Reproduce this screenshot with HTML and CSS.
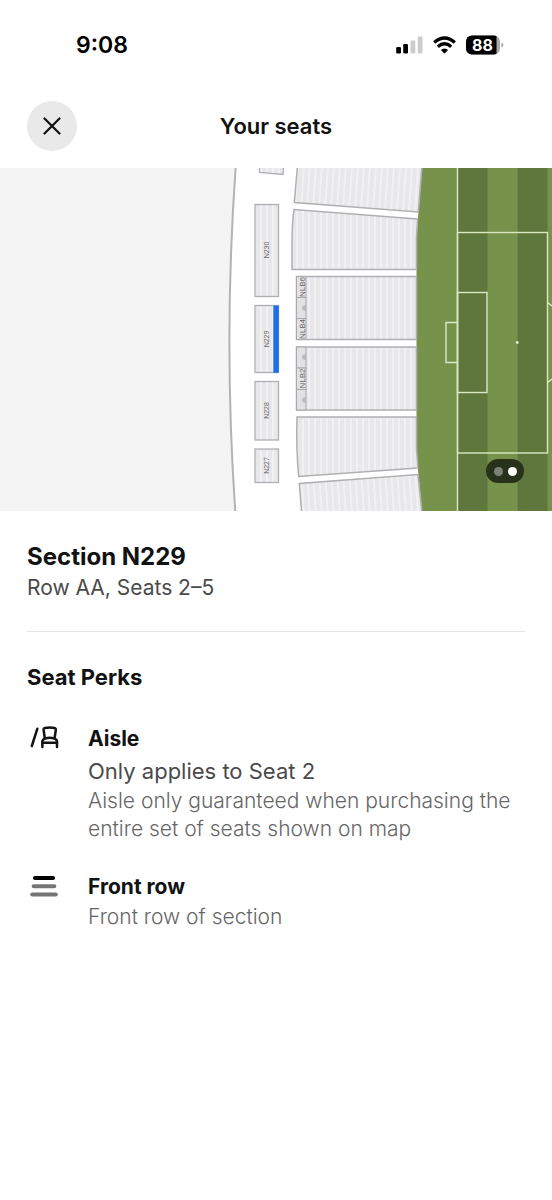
FILE: index.html
```html
<!DOCTYPE html>
<html lang="en">
<head>
    <meta charset="UTF-8">
    <meta name="viewport" content="width=device-width, initial-scale=1">
    <title>Your seats</title>
    <link rel="stylesheet" href="styles.css">
</head>
<body>

    <div class="status-bar">
        <span class="time">9:08</span>
        <div class="status-icons">
            <svg width="28" height="18" viewBox="0 0 28 18">
                <rect x="0.2" y="11" width="4.8" height="6.5" rx="1.3"/>
                <rect x="7.2" y="8" width="4.8" height="9.5" rx="1.3"/>
                <rect x="14.5" y="4.5" width="4.8" height="13" rx="1.3" fill="#cccccc"/>
                <rect x="21.7" y="0.5" width="4.8" height="17" rx="1.3" fill="#cccccc"/>
            </svg>
            <svg width="24" height="18" viewBox="0 0 24 18">
                <g fill="none" stroke="#000" stroke-width="3.3">
                    <path d="M1.2 6.4 Q11.5 -2.4 21.8 6.4"/>
                    <path d="M4.8 10.7 Q11.5 4.9 18.2 10.7"/>
                </g>
                <path d="M7.9 14 Q11.5 11 15.1 14 L12.2 17 Q11.5 17.7 10.8 17 Z"/>
            </svg>
            <svg width="38" height="20" viewBox="0 0 38 20">
                <clipPath id="battery"><rect width="34" height="19" y="0.5" rx="6"/></clipPath>
                <rect width="34" height="19" y="0.5" rx="6" fill="#aaaaaa"/>
                <rect width="30.5" height="20" clip-path="url(#battery)"/>
                <path d="M35.3 7.5 Q37.4 8.3 37.4 10 Q37.4 11.7 35.3 12.5 Z" fill="#aaaaaa"/>
                <text class="battery-level" x="16.5" y="16" text-anchor="middle">88</text>
            </svg>
        </div>
    </div>

    <header class="header">
        <button class="close" type="button" aria-label="Close">
            <svg width="18" height="18" viewBox="0 0 18 18">
                <path d="M1.5 1.5 L16.5 16.5 M16.5 1.5 L1.5 16.5" fill="none" stroke="#121212" stroke-width="2.2" stroke-linecap="round"/>
            </svg>
        </button>
        <h1>Your seats</h1>
    </header>

    <div class="map">
        <svg class="map-drawing" viewBox="0 0 552 343">
            <defs>
                <pattern id="rows" width="6" height="10" patternUnits="userSpaceOnUse">
                    <rect width="6" height="10" fill="#e8e8eb"/>
                    <rect x="2" width="2" height="10" fill="#f1f1f3"/>
                </pattern>
                <pattern id="rows-top" href="#rows" patternTransform="rotate(4)"/>
                <pattern id="rows-bottom" href="#rows" patternTransform="rotate(-4)"/>
            </defs>

            <!-- outer wall -->
            <rect width="552" height="343" fill="#f4f4f4"/>
            <path d="M235.7 -1 Q223.3 171 235.3 344 H552 V-1 Z" fill="#fff" stroke="#b3b3b3" stroke-width="2"/>

            <!-- pitch -->
            <path d="M422 0 L418 50 L416.5 70 V280 L418 302 L422 343 H552 V0 Z" fill="#77924b"/>
            <rect x="458" width="29.5" height="343" fill="#5f773d"/>
            <rect x="517.5" width="30" height="343" fill="#5f773d"/>
            <g fill="none" stroke="#d9e8c3" stroke-width="1.4">
                <path d="M457.5 0 V343"/>
                <rect x="457.5" y="64.5" width="90" height="220.5"/>
                <rect x="457.5" y="124.5" width="29.5" height="100"/>
                <path d="M457.5 154.5 H446 V194.5 H457.5"/>
                <path d="M547.5 134.5 L552 138 M547.5 214.5 L552 211"/>
            </g>
            <circle cx="517.3" cy="174.5" r="1.4" fill="#e8f4d6"/>

            <!-- upper tier -->
            <g fill="url(#rows)" stroke="#b0b0b2" stroke-width="1.3">
                <path d="M259.5 -2 V4.5 L283 6.5 L283.5 -2 Z"/>
                <rect x="255" y="36.5" width="23.5" height="92"/>
                <rect x="255" y="137.5" width="23.5" height="67"/>
                <rect x="255" y="213.5" width="23.5" height="58.5"/>
                <rect x="255" y="281" width="23.5" height="33.5"/>
            </g>
            <rect x="273.3" y="137.5" width="5.5" height="67.3" fill="#1f6de8"/>

            <!-- lower tier -->
            <g fill="url(#rows)" stroke="#b0b0b2" stroke-width="1.5">
                <path d="M297.5 -2 L294.3 34.5 L418.3 44 L422 -2" fill="url(#rows-top)"/>
                <path d="M417.5 51 L294 41.5 Q292 55 292 75 V101.5 H416.5 V70 Z"/>
                <path d="M416.5 108.5 H296.5 V171.5 H416.5 Z"/>
                <path d="M416.5 179 H296.5 V242 H416.5 Z"/>
                <path d="M416.5 249 H297 Q296 281 298.7 308.5 L417.8 300 L416.5 280 Z"/>
                <path d="M422 345 L418 306.5 L299.3 315.5 L301.7 345" fill="url(#rows-bottom)"/>
            </g>

            <!-- lodge boxes -->
            <g fill="#e2e2e4" stroke="#aaaaac">
                <rect x="296.5" y="108.5" width="9.5" height="21"/>
                <rect x="296.5" y="129.5" width="9.5" height="21"/>
                <rect x="296.5" y="150.5" width="9.5" height="21"/>
                <rect x="296.5" y="179" width="9.5" height="21"/>
                <rect x="296.5" y="200" width="9.5" height="21.5"/>
                <rect x="296.5" y="221.5" width="9.5" height="20.5"/>
            </g>
            <g fill="#bcbcbe">
                <path d="M306 137 Q302 137 302 140 Q302 143 306 143 Z"/>
                <path d="M306 186 Q302 186 302 189 Q302 192 306 192 Z"/>
                <path d="M306 229 Q302 229 302 232 Q302 235 306 235 Z"/>
            </g>

            <g class="section-label">
                <text transform="translate(269 82) rotate(-90)">N230</text>
                <text transform="translate(269 171) rotate(-90)">N229</text>
                <text transform="translate(269 242.5) rotate(-90)">N228</text>
                <text transform="translate(269 297.5) rotate(-90)">N227</text>
            </g>
            <g class="section-label box-label">
                <text transform="translate(304.5 119) rotate(-90)">NLB6</text>
                <text transform="translate(304.5 161) rotate(-90)">NLB4</text>
                <text transform="translate(304.5 210.5) rotate(-90)">NLB2</text>
            </g>
        </svg>
        <div class="pager">
            <span class="dot"></span>
            <span class="dot active"></span>
        </div>
    </div>

    <main class="details">
        <section class="seat-info">
            <h2>Section N229</h2>
            <p>Row AA, Seats 2–5</p>
        </section>

        <section class="perks">
            <h3>Seat Perks</h3>
            <div class="perk">
                <svg class="perk-icon" width="32" height="28" viewBox="0 0 32 28">
                    <g fill="none" stroke="#121212" stroke-width="2.5" stroke-linecap="round" stroke-linejoin="round">
                        <path d="M10.3 3.8 L4.8 21"/>
                        <path d="M17.8 13 L16.6 5 Q16.4 3.4 18 3 Q22.7 1.8 27.4 3 Q29 3.4 28.8 5 L27.6 13"/>
                        <path d="M15.4 22 V16.5 Q15.4 14.5 18 13.6 Q22.7 12 27.4 13.6 Q30 14.5 30 16.5 V22"/>
                        <path d="M15.4 17.8 H30"/>
                    </g>
                </svg>
                <div class="perk-text">
                    <h4>Aisle</h4>
                    <p class="applies">Only applies to Seat 2</p>
                    <p class="note">Aisle only guaranteed when purchasing the entire set of seats shown on map</p>
                </div>
            </div>
            <div class="perk">
                <svg class="perk-icon" width="32" height="28" viewBox="0 0 32 28">
                    <g stroke="#757575" stroke-width="4" stroke-linecap="round">
                        <path d="M8 5 H26" stroke="#000"/>
                        <path d="M6.7 13.2 H27.3"/>
                        <path d="M5.2 21.4 H28.8"/>
                    </g>
                </svg>
                <div class="perk-text">
                    <h4>Front row</h4>
                    <p class="note">Front row of section</p>
                </div>
            </div>
        </section>
    </main>

</body>
</html>
```
FILE: styles.css
```css
* {
    box-sizing: border-box;
}
body {
    margin: 0;
    background-color: #fff;
    color: #121212;
    font-family: Inter, "Liberation Sans", sans-serif;
}
h1, h2, h3, h4, p {
    margin: 0;
}
svg {
    display: block;
}
.status-bar {
    display: flex;
    justify-content: space-between;
    align-items: center;
    padding: 30px 48px 24px 76px;
    color: #000;
}
.time {
    font-size: 23px;
    line-height: 30px;
    font-weight: 600;
}
.status-icons {
    display: flex;
    align-items: center;
    gap: 9px;
}
.battery-level {
    fill: #fff;
    font-size: 16px;
    font-weight: 700;
}
.header {
    display: grid;
    grid-template-columns: 50px 1fr 50px;
    align-items: center;
    height: 84px;
    padding: 0 27px;
}
.header h1 {
    text-align: center;
    font-size: 22px;
    line-height: 30px;
    font-weight: 600;
}
.close {
    display: flex;
    align-items: center;
    justify-content: center;
    width: 50px;
    height: 50px;
    padding: 0;
    border: none;
    border-radius: 50%;
    background-color: #e9e9e9;
    cursor: pointer;
}
.map {
    position: relative;
}
.map-drawing {
    width: 100%;
    height: auto;
}
.section-label {
    fill: #666;
    font-family: "Liberation Sans", Arial, sans-serif;
    font-size: 7px;
    text-anchor: middle;
}
.box-label {
    font-size: 8px;
}
.pager {
    position: absolute;
    right: 28px;
    bottom: 28px;
    display: flex;
    align-items: center;
    justify-content: center;
    gap: 5px;
    width: 38px;
    height: 24px;
    border-radius: 12px;
    background-color: #28321b;
}
.dot {
    width: 9px;
    height: 9px;
    border-radius: 50%;
    background-color: #7c8275;
}
.dot.active {
    background-color: #fff;
}
.details {
    padding: 30px 27px;
}
.seat-info {
    padding-bottom: 28px;
    border-bottom: 1px solid #e4e4e4;
}
.seat-info h2 {
    font-size: 24px;
    line-height: 32px;
    font-weight: 700;
}
.seat-info p {
    color: #4a4a4a;
    font-size: 21px;
    line-height: 30px;
}
.perks {
    padding-top: 29px;
}
.perks h3 {
    margin-bottom: 30px;
    font-size: 22px;
    line-height: 32px;
    font-weight: 700;
}
.perk {
    display: flex;
    gap: 29px;
    margin-bottom: 28px;
}
.perk-icon {
    flex: none;
    margin-top: 2px;
}
.perk-text h4 {
    font-size: 21px;
    line-height: 32px;
    font-weight: 700;
}
.applies {
    color: #4a4a4a;
    font-size: 22px;
    line-height: 32px;
}
.note {
    color: #666;
    font-size: 21px;
    line-height: 28px;
    font-weight: 300;
}
```
